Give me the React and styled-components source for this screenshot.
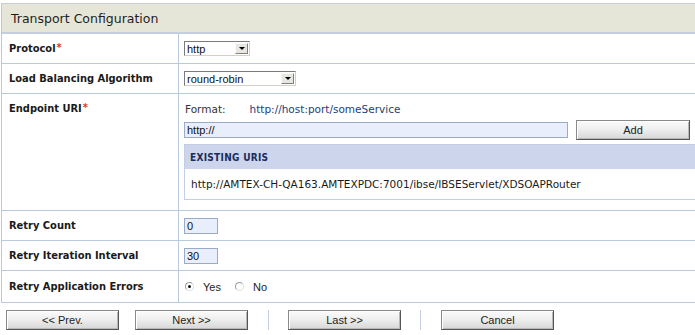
import React from "react";
import styled, { createGlobalStyle } from "styled-components";

const GlobalStyle = createGlobalStyle`
  html, body {
    margin: 0;
    padding: 0;
    background: #ffffff;
  }
  body {
    font-family: "DejaVu Sans Condensed", "DejaVu Sans", Tahoma, sans-serif;
    color: #1a1a1a;
  }
`;

const Page = styled.div`
  width: 695px;
  height: 335px;
  padding: 3px 0 0 1px;
  box-sizing: border-box;
  overflow: hidden;
`;

const Panel = styled.div`
  border-left: 1px solid #b9c9de;
  border-top: 1px solid #c3cfe0;
`;

const Header = styled.div`
  height: 28px;
  background: #e6e6d8;
  border-bottom: 2px solid #c3cfe0;
  display: flex;
  align-items: center;
  padding-left: 9px;
  font-family: "DejaVu Sans", Tahoma, sans-serif;
  font-size: 12.5px;
  color: #1e1e1e;
`;

const Row = styled.div`
  display: grid;
  grid-template-columns: 177px 1fr;
  height: ${({ $h }) => $h}px;
  border-bottom: 1px solid #b9c9de;
  box-sizing: border-box;
`;

const LabelCell = styled.div`
  border-right: 1px solid #b9c9de;
  padding: ${({ $top }) => ($top ? "8px" : "0")} 0 0 7px;
  display: flex;
  align-items: ${({ $top }) => ($top ? "flex-start" : "center")};
  font-weight: bold;
  font-size: 11px;
  color: #1a1a1a;
`;

const Star = styled.span`
  color: #e23a2a;
  font-size: 11px;
  margin-left: 1px;
  align-self: flex-start;
  margin-top: ${({ $top }) => ($top ? "-1px" : "7px")};
`;

const ValueCell = styled.div`
  padding-left: 5px;
  display: flex;
  align-items: ${({ $top }) => ($top ? "stretch" : "center")};
  flex-direction: ${({ $top }) => ($top ? "column" : "row")};
  font-size: 11px;
`;

const Select = styled.div`
  width: ${({ $w }) => $w}px;
  height: 15px;
  box-sizing: border-box;
  border: 1px solid #7a7a7a;
  border-right-color: #d4d0c8;
  border-bottom-color: #d4d0c8;
  background: #ffffff;
  display: flex;
  align-items: center;
  justify-content: space-between;
  font-family: "Liberation Sans", Arial, sans-serif;
  font-size: 11px;
  color: #111;
  padding-left: 2px;
`;

const SelectArrow = styled.span`
  width: 13px;
  height: 11px;
  margin-right: 1px;
  box-sizing: border-box;
  background: #e8e6e0;
  border: 1px solid #fafafa;
  border-right-color: #808080;
  border-bottom-color: #808080;
  display: flex;
  align-items: center;
  justify-content: center;
  &::after {
    content: "";
    border-left: 3px solid transparent;
    border-right: 3px solid transparent;
    border-top: 3px solid #000;
  }
`;

const FormatLine = styled.div`
  display: flex;
  gap: 24px;
  margin-top: 9px;
  padding-left: 1px;
  font-family: "DejaVu Sans", Tahoma, sans-serif;
  font-size: 10.5px;
  color: #333;
`;

const FormatLink = styled.span`
  color: #24407c;
`;

const UriLine = styled.div`
  display: flex;
  align-items: center;
  gap: 8px;
  margin-top: 5px;
`;

const TextBox = styled.div`
  width: ${({ $w }) => $w}px;
  height: 16px;
  box-sizing: border-box;
  border: 1px solid #9aabc8;
  background: #e8eefb;
  display: flex;
  align-items: center;
  padding-left: 2px;
  font-family: "Liberation Sans", Arial, sans-serif;
  font-size: 11px;
  color: #111;
`;

const Button = styled.button`
  width: ${({ $w }) => $w || 113}px;
  height: 20px;
  box-sizing: border-box;
  border: 1px solid #555;
  border-top-color: #8a8a8a;
  border-left-color: #8a8a8a;
  background: linear-gradient(#fbfbfb 0%, #efefef 45%, #d6d6d6 100%);
  box-shadow: inset 1px 1px 0 #ffffff, inset -1px -1px 0 #b8b8b8;
  font-family: "Liberation Sans", Arial, sans-serif;
  font-size: 11px;
  color: #222;
  padding: 0;
  cursor: pointer;
`;

const Existing = styled.div`
  margin-top: 4px;
  border: 1px solid #c3cfe0;
  border-right: none;
`;

const ExistingHead = styled.div`
  height: 24px;
  background: #cdd5ec;
  display: flex;
  align-items: center;
  padding-left: 5px;
  font-size: 10px;
  font-weight: bold;
  letter-spacing: 0.3px;
  color: #1b2c5c;
`;

const ExistingItem = styled.div`
  height: 30px;
  display: flex;
  align-items: center;
  padding-left: 6px;
  font-family: "DejaVu Sans", Tahoma, sans-serif;
  font-size: 10.5px;
  color: #1a1a1a;
`;

const RadioGroup = styled.label`
  display: flex;
  align-items: center;
  gap: 9px;
  margin-right: 13px;
  font-family: "Liberation Sans", Arial, sans-serif;
  font-size: 11px;
  color: #222;
`;

const Radio = styled.span`
  width: 9px;
  height: 9px;
  margin-left: 1px;
  border-radius: 50%;
  box-sizing: border-box;
  border: 1px solid #9a9a9a;
  border-right-color: #e0e0e0;
  border-bottom-color: #e0e0e0;
  background: #fff;
  display: flex;
  align-items: center;
  justify-content: center;
  &::after {
    content: "";
    width: 3px;
    height: 3px;
    border-radius: 50%;
    background: ${({ $on }) => ($on ? "#111" : "transparent")};
  }
`;

const Footer = styled.div`
  display: flex;
  align-items: center;
  padding: 7px 0 0 5px;
`;

const Sep = styled.span`
  width: 1px;
  height: 20px;
  background: #c3cfe0;
  margin: 0 ${({ $r }) => $r}px 0 ${({ $l }) => $l}px;
`;

const Gap = styled.span`
  width: ${({ $w }) => $w}px;
`;

const App = () => {
  return (
    <>
      <GlobalStyle />
      <Page>
        <Panel>
          <Header>Transport Configuration</Header>

          <Row $h={30}>
            <LabelCell>
              Protocol<Star>*</Star>
            </LabelCell>
            <ValueCell>
              <Select $w={66}>
                http
                <SelectArrow />
              </Select>
            </ValueCell>
          </Row>

          <Row $h={30}>
            <LabelCell>Load Balancing Algorithm</LabelCell>
            <ValueCell>
              <Select $w={112}>
                round-robin
                <SelectArrow />
              </Select>
            </ValueCell>
          </Row>

          <Row $h={117}>
            <LabelCell $top>
              Endpoint URI<Star $top>*</Star>
            </LabelCell>
            <ValueCell $top>
              <FormatLine>
                <span>Format:</span>
                <FormatLink>http://host:port/someService</FormatLink>
              </FormatLine>
              <UriLine>
                <TextBox $w={384}>http://</TextBox>
                <Button $w={114}>Add</Button>
              </UriLine>
              <Existing>
                <ExistingHead>EXISTING URIS</ExistingHead>
                <ExistingItem>
                  http://AMTEX-CH-QA163.AMTEXPDC:7001/ibse/IBSEServlet/XDSOAPRouter
                </ExistingItem>
              </Existing>
            </ValueCell>
          </Row>

          <Row $h={30}>
            <LabelCell>Retry Count</LabelCell>
            <ValueCell>
              <TextBox $w={34}>0</TextBox>
            </ValueCell>
          </Row>

          <Row $h={30}>
            <LabelCell>Retry Iteration Interval</LabelCell>
            <ValueCell>
              <TextBox $w={34}>30</TextBox>
            </ValueCell>
          </Row>

          <Row $h={32}>
            <LabelCell>Retry Application Errors</LabelCell>
            <ValueCell>
              <RadioGroup>
                <Radio $on />
                Yes
              </RadioGroup>
              <RadioGroup>
                <Radio />
                No
              </RadioGroup>
            </ValueCell>
          </Row>
        </Panel>

        <Footer>
          <Button>&lt;&lt; Prev.</Button>
          <Gap $w={16} />
          <Button>Next &gt;&gt;</Button>
          <Sep $l={20} $r={19} />
          <Button>Last &gt;&gt;</Button>
          <Sep $l={19} $r={20} />
          <Button>Cancel</Button>
        </Footer>
      </Page>
    </>
  );
};

export default App;
